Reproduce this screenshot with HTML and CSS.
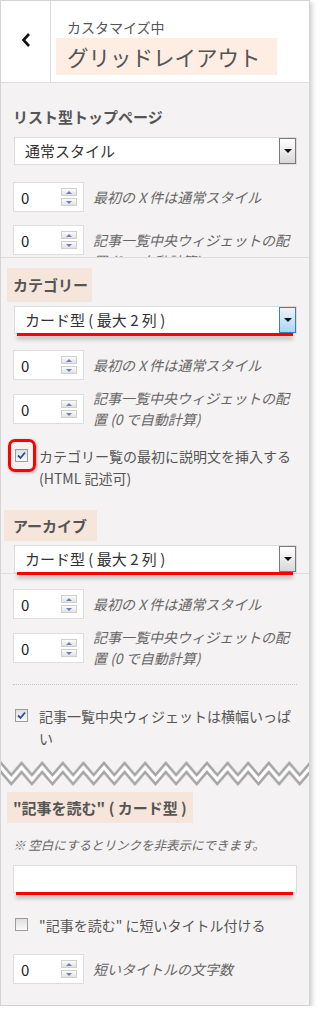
FILE: index.html
```html
<!DOCTYPE html>
<html>
<head>
    <meta charset="utf-8">
    <title>グリッドレイアウト</title>
    <link rel="stylesheet" href="styles.css">
</head>
<body>
    <div class="panel">
        <div class="header">
            <div class="back">
                <svg width="10" height="16" viewBox="0 0 10 16"><polyline points="8,2 2.5,8 8,14" fill="none" stroke="#111" stroke-width="2.6"/></svg>
            </div>
            <div class="title-wrap">
                <div class="sub">カスタマイズ中</div>
                <div class="title">グリッドレイアウト</div>
            </div>
        </div>

        <!-- list top page -->
        <div class="section sec-top">
            <div class="sec-label">リスト型トップページ</div>
            <div class="select"><span>通常スタイル</span><span class="arrow"></span></div>
            <div class="num-row">
                <div class="num"><span>0</span><span class="spin"><i class="up"></i><i class="down"></i></span></div>
                <div class="num-label">最初の X 件は通常スタイル</div>
            </div>
            <div class="num-row row-top">
                <div class="num"><span>0</span><span class="spin"><i class="up"></i><i class="down"></i></span></div>
                <div class="num-label">記事一覧中央ウィジェットの配置 (0 で自動計算)</div>
            </div>
        </div>

        <!-- category / archive -->
        <div class="section sec-cat">
            <div class="tag">カテゴリー</div>
            <div class="select focus marked"><span>カード型 ( 最大 2 列 )</span><span class="arrow"></span></div>
            <div class="num-row">
                <div class="num"><span>0</span><span class="spin"><i class="up"></i><i class="down"></i></span></div>
                <div class="num-label">最初の X 件は通常スタイル</div>
            </div>
            <div class="num-row two">
                <div class="num"><span>0</span><span class="spin"><i class="up"></i><i class="down"></i></span></div>
                <div class="num-label">記事一覧中央ウィジェットの配置 (0 で自動計算)</div>
            </div>
            <div class="check-row">
                <span class="check ringed"><svg width="11" height="11" viewBox="0 0 11 11"><polyline points="2,5.5 4.5,8 9,2.5" fill="none" stroke="#2c4a96" stroke-width="1.8"/></svg></span>
                <span>カテゴリー覧の最初に説明文を挿入する (HTML 記述可)</span>
            </div>
            <div class="tag tag-arc">アーカイブ</div>
            <div class="select marked"><span>カード型 ( 最大 2 列 )</span><span class="arrow"></span></div>
        </div>

        <div class="section sec-arc">
            <div class="num-row">
                <div class="num"><span>0</span><span class="spin"><i class="up"></i><i class="down"></i></span></div>
                <div class="num-label">最初の X 件は通常スタイル</div>
            </div>
            <div class="num-row two">
                <div class="num"><span>0</span><span class="spin"><i class="up"></i><i class="down"></i></span></div>
                <div class="num-label">記事一覧中央ウィジェットの配置 (0 で自動計算)</div>
            </div>
            <div class="dots"></div>
            <div class="check-row">
                <span class="check"><svg width="11" height="11" viewBox="0 0 11 11"><polyline points="2,5.5 4.5,8 9,2.5" fill="none" stroke="#2c4a96" stroke-width="1.8"/></svg></span>
                <span>記事一覧中央ウィジェットは横幅いっぱい</span>
            </div>
        </div>

        <svg class="zigzag" width="308" height="26">
            <defs>
                <pattern id="zz" width="20.6" height="26" patternUnits="userSpaceOnUse">
                    <polygon points="0,3 10.3,15 20.6,3 20.6,12 10.3,24 0,12" fill="#fff"/>
                    <polyline points="-1,1.8 10.3,15 21.6,1.8" fill="none" stroke="#a6a6a6" stroke-width="2.5"/>
                    <polyline points="-1,10.8 10.3,24 21.6,10.8" fill="none" stroke="#a6a6a6" stroke-width="2.5"/>
                </pattern>
            </defs>
            <rect width="308" height="26" fill="url(#zz)"/>
        </svg>

        <!-- read more -->
        <div class="section sec-more">
            <div class="tag tag-more">"記事を読む" ( カード型 )</div>
            <div class="note">※ 空白にするとリンクを非表示にできます。</div>
            <div class="text-input marked"></div>
            <div class="check-row">
                <span class="check"></span>
                <span>"記事を読む" に短いタイトル付ける</span>
            </div>
            <div class="num-row">
                <div class="num"><span>0</span><span class="spin"><i class="up"></i><i class="down"></i></span></div>
                <div class="num-label">短いタイトルの文字数</div>
            </div>
        </div>
    </div>
</body>
</html>
```

FILE: styles.css
```css
body {
    margin: 0;
    background: #fff;
    font-family: "Noto Sans CJK JP", sans-serif;
    color: #555;
}
.panel {
    width: 310px;
    box-sizing: border-box;
    border: 1px solid #d4d4d4;
    background: #f4f2f2;
    box-shadow: 2px 2px 5px rgba(0,0,0,0.2);
}

/* header */
.header {
    display: flex;
    height: 82px;
    box-sizing: border-box;
    background: #fff;
    border-bottom: 1px solid #ddd;
}
.back {
    width: 50px;
    border-right: 1px solid #ddd;
    display: flex;
    justify-content: center;
    padding-top: 31px;
    box-sizing: border-box;
}
.back svg { display: block; }
.title-wrap {
    padding-left: 5px;
}
.sub {
    margin: 16px 0 0 11px;
    font-size: 14px;
    line-height: 20px;
}
.title {
    display: inline-block;
    margin-top: 1px;
    background: #fdede2;
    font-size: 21.5px;
    line-height: 37px;
    padding: 0 16px 0 11px;
}

/* sections */
.section {
    padding: 0 12px;
}
.sec-label {
    font-size: 15px;
    font-weight: bold;
    line-height: 22px;
}
.tag {
    display: inline-block;
    background: #f5e5da;
    font-size: 15px;
    font-weight: bold;
    line-height: 34px;
    padding: 0 4px 0 6px;
    margin-left: -6px;
}
.tag-arc {
    line-height: 31px;
    padding: 0 10px 0 9px;
    margin-left: -9px;
    margin-top: 21px;
}
.tag-more {
    line-height: 31px;
    padding: 0 6px 0 6px;
}

/* select */
.select {
    display: flex;
    justify-content: space-between;
    height: 28px;
    box-sizing: border-box;
    margin: 4px 0 0 1px;
    border: 1px solid #ddd;
    background: #fff;
    padding-left: 10px;
    font-size: 15px;
    line-height: 26px;
    color: #333;
}
.arrow {
    width: 17px;
    box-sizing: border-box;
    margin: 0 0 0 0;
    border: 1px solid #7a7a7a;
    background: linear-gradient(#fff, #d8d8d8);
    display: flex;
    align-items: center;
    justify-content: center;
}
.arrow::after {
    content: "";
    border-left: 4px solid transparent;
    border-right: 4px solid transparent;
    border-top: 4px solid #111;
}
.focus .arrow {
    border-color: #3c7fb1;
    background: linear-gradient(#eaf5fd, #a9d7f4);
}
.marked {
    position: relative;
}
.marked::after {
    content: "";
    position: absolute;
    left: 2px;
    right: 3px;
    bottom: -3px;
    height: 3px;
    background: #f00;
    box-shadow: 0 3px 4px rgba(0,0,0,0.3);
}

/* number fields */
.num-row {
    display: flex;
    align-items: center;
    gap: 9px;
    margin-top: 16px;
}
.num-row.two {
    margin-top: 8px;
}
.num {
    flex: none;
    width: 71px;
    height: 30px;
    box-sizing: border-box;
    border: 1px solid #ddd;
    background: #fff;
    display: flex;
    align-items: center;
    justify-content: space-between;
    padding: 0 6px 0 7px;
    font-size: 15px;
    color: #222;
}
.spin {
    display: flex;
    flex-direction: column;
    gap: 2px;
}
.spin i {
    display: flex;
    align-items: center;
    justify-content: center;
    width: 16px;
    height: 8px;
    box-sizing: border-box;
    border: 1px solid #cfcfcf;
    background: linear-gradient(#fbfbfb, #e2e2e2);
}
.spin .up::after {
    content: "";
    border-left: 3px solid transparent;
    border-right: 3px solid transparent;
    border-bottom: 3px solid #6b80b6;
}
.spin .down::after {
    content: "";
    border-left: 3px solid transparent;
    border-right: 3px solid transparent;
    border-top: 3px solid #6b80b6;
}
.num-label {
    font-style: italic;
    font-size: 14px;
    line-height: 21px;
    color: #666;
}
.row-top {
    align-items: flex-start;
}
.row-top .num-label {
    padding-top: 4.5px;
}

/* checkboxes */
.check-row {
    display: flex;
    gap: 11px;
    font-size: 14px;
    line-height: 22px;
    margin-top: 15px;
}
.check {
    position: relative;
    flex: none;
    width: 13px;
    height: 13px;
    box-sizing: border-box;
    margin: 4px 0 0 2px;
    border: 1px solid #9c9c9c;
    background: linear-gradient(#dedede, #fafafa);
}
.check svg {
    display: block;
}
.ringed::before {
    content: "";
    position: absolute;
    left: -8px;
    top: -11px;
    width: 28px;
    height: 33px;
    box-sizing: border-box;
    border: 3px solid #f00;
    border-radius: 7px;
    box-shadow: 1px 1px 3px rgba(0,0,0,0.3);
}

/* per section spacing */
.sec-top {
    height: 175px;
    box-sizing: border-box;
    padding-top: 23px;
    overflow: hidden;
    border-bottom: 1px solid #ddd;
}
.sec-top .select { margin-top: 9px; }
.sec-top .num-row { margin-top: 17px; }
.sec-top .row-top { margin-top: 13px; }
.sec-cat {
    padding-top: 10px;
    border-bottom: 1px solid #ddd;
}
.sec-arc {
    padding-top: 15px;
    padding-bottom: 11px;
}
.sec-arc .num-row:first-child { margin-top: 0; }
.sec-arc .check-row { margin-top: 20px; }
.dots {
    margin-top: 15px;
    border-top: 1px dotted #c2c2c2;
}
.zigzag {
    display: block;
}
.sec-more {
    padding-top: 6px;
    padding-bottom: 21px;
}
.note {
    margin-top: 11px;
    font-size: 12.5px;
    font-style: italic;
    line-height: 22px;
    color: #666;
}
.text-input {
    height: 28px;
    box-sizing: border-box;
    margin-top: 9px;
    border: 1px solid #ddd;
    background: #fff;
}
.sec-more .check-row { margin-top: 21px; }
.sec-more .num-row { margin-top: 18px; }
```
